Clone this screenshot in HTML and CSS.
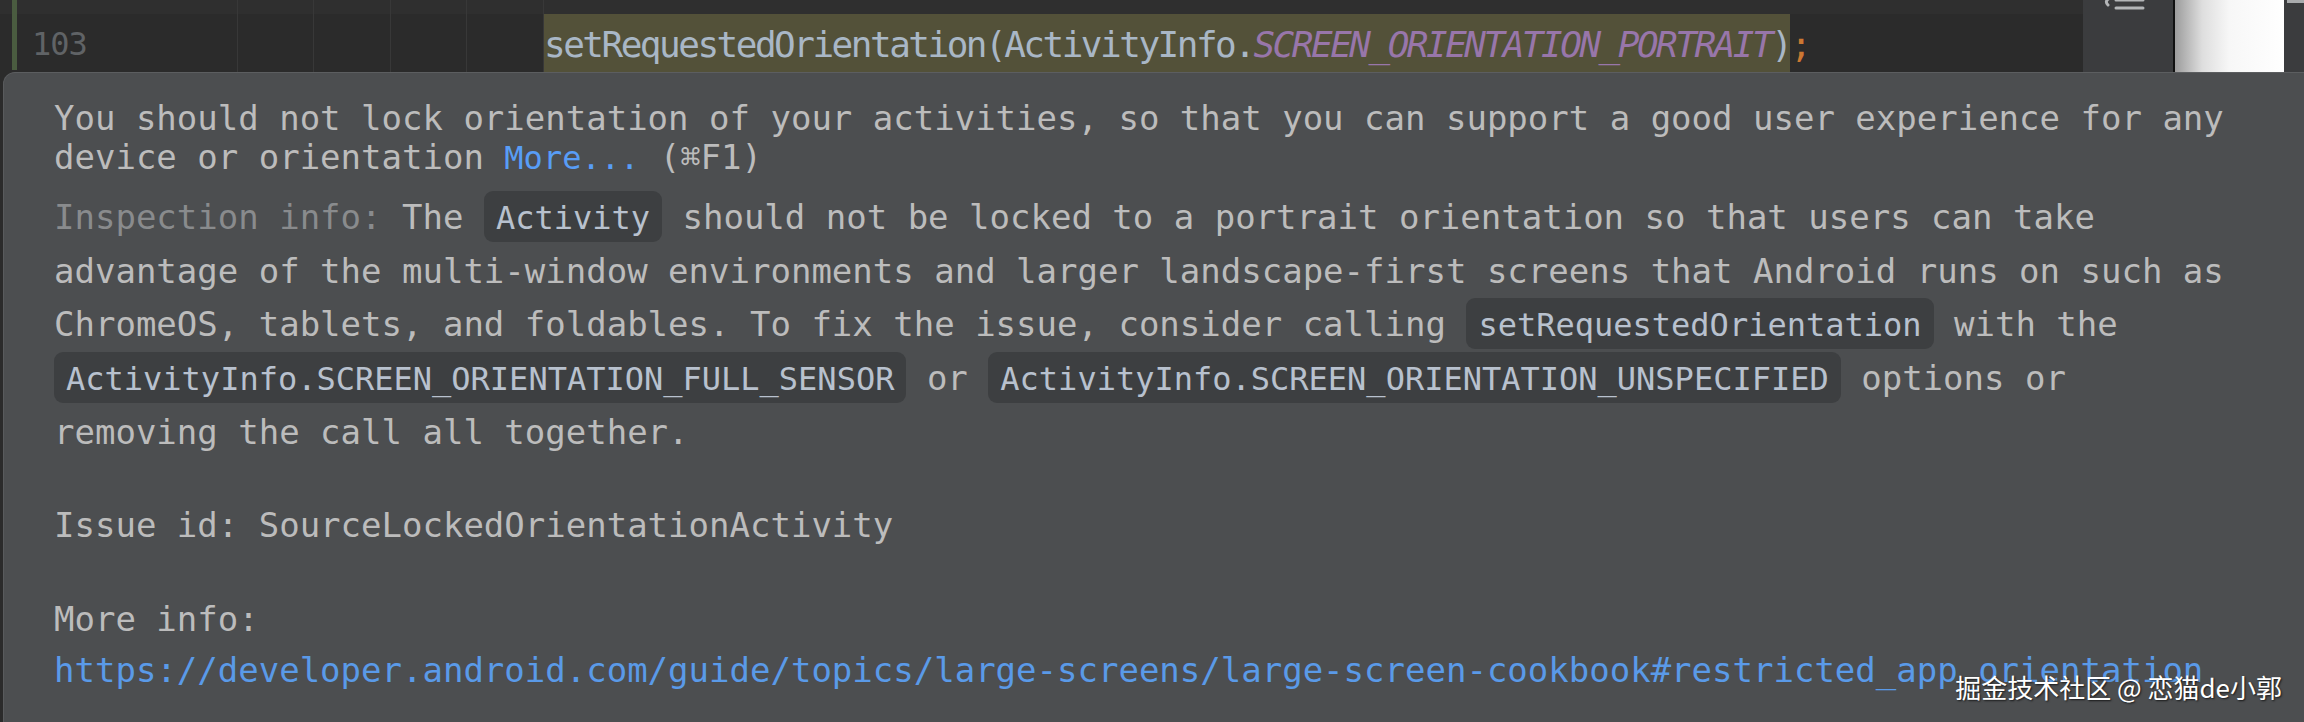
FILE: index.html
```html
<!DOCTYPE html>
<html>
<head>
<meta charset="utf-8">
<link rel="stylesheet" href="styles.css">
</head>
<body>
<div class="screen">
  <div class="editor">
    <div class="code-area">
      <div class="row prev">
        <div class="gutter"><span class="vcs"></span><span class="lnum"></span></div>
        <div class="code"></div>
      </div>
      <div class="row cur">
        <div class="gutter"><span class="vcs"></span><span class="lnum">103</span></div>
        <div class="code"><span class="indent"></span><span class="hl">setRequestedOrientation(ActivityInfo.<i class="const">SCREEN_ORIENTATION_PORTRAIT</i>)</span><span class="semi">;</span></div>
      </div>
    </div>
    <div class="toolbar">
      <svg class="tool-icon" width="46" height="14" viewBox="0 0 46 14">
        <path d="M9 0 Q3 3 7 7" fill="none" stroke="#b4b6b8" stroke-width="3" stroke-linecap="round"/>
        <path d="M15 2 H42" stroke="#b4b6b8" stroke-width="3" stroke-linecap="round"/>
        <path d="M15 10 H42" stroke="#b4b6b8" stroke-width="3" stroke-linecap="round"/>
      </svg>
    </div>
    <div class="preview"></div>
    <div class="edge"><span class="edge-line"></span></div>
  </div>
  <div class="popup">
    <p class="summary">You should not lock orientation of your activities, so that you can support a good user experience for any<br>device or orientation <a class="more">More...</a> (⌘F1)</p>
    <p class="details"><span class="label">Inspection info:</span> The <code class="chip">Activity</code> should not be locked to a portrait orientation so that users can take<br>advantage of the multi-window environments and larger landscape-first screens that Android runs on such as<br>ChromeOS, tablets, and foldables. To fix the issue, consider calling <code class="chip">setRequestedOrientation</code> with the<br><code class="chip">ActivityInfo.SCREEN_ORIENTATION_FULL_SENSOR</code> or <code class="chip">ActivityInfo.SCREEN_ORIENTATION_UNSPECIFIED</code> options or<br>removing the call all together.</p>
    <p class="issue">Issue id: SourceLockedOrientationActivity</p>
    <p class="info">More info:<br><a class="url">https://developer.android.com/guide/topics/large-screens/large-screen-cookbook#restricted_app_orientation</a></p>
  </div>
  <div class="watermark">掘金技术社区 @ 恋猫de小郭</div>
</div>
</body>
</html>
```
FILE: styles.css
```css
* { box-sizing: border-box; }
html, body {
  margin: 0;
  padding: 0;
  background: #2b2b2b;
}
.screen {
  position: relative;
  width: 2304px;
  height: 722px;
  overflow: hidden;
  background: #2b2b2b;
  font-family: "DejaVu Sans Mono", monospace;
}
.editor {
  display: flex;
  height: 72px;
}
.code-area {
  flex: 0 0 2083px;
  display: flex;
  flex-direction: column;
}
.row {
  display: flex;
}
.row.prev {
  height: 14px;
  background: #2f2f2f;
}
.row.cur {
  height: 58px;
  background: #2b2b2b;
}
.gutter {
  flex: 0 0 237px;
  display: flex;
  padding-left: 12px;
}
.vcs {
  width: 5px;
  background: #4a5c40;
}
.row.cur .vcs { margin-bottom: 2px; }
.lnum {
  padding-left: 15px;
  padding-top: 4px;
  line-height: 52px;
  font-size: 32px;
  letter-spacing: -1px;
  color: #606366;
}
.code {
  flex: 1;
  display: flex;
  background-image: repeating-linear-gradient(to right, #383838 0 1px, transparent 1px 76.4px);
  background-size: 307px 100%;
  background-repeat: no-repeat;
  font-size: 36px;
  letter-spacing: -2.5px;
  color: #a9b7c6;
  white-space: pre;
}
.indent {
  flex: 0 0 307px;
}
.hl {
  display: block;
  background: #535139;
  padding-top: 8px;
  line-height: 46px;
}
.const {
  color: #9876aa;
  font-style: italic;
}
.semi {
  display: block;
  padding-top: 8px;
  line-height: 46px;
  color: #cc7832;
}
.toolbar {
  flex: 0 0 90px;
  background: #3b3c3e;
  position: relative;
}
.tool-icon {
  display: block;
  margin-left: 18px;
  margin-top: -2px;
}
.preview {
  flex: 0 0 111px;
  border-left: 2px solid #111111;
  background: linear-gradient(to right, #9c9c9c 0%, #dedede 25%, #f7f7f7 50%, #ffffff 100%);
}
.edge {
  flex: 1;
  background: #3b3c3e;
  padding-left: 3px;
}
.edge-line {
  display: block;
  height: 3px;
  background: #a9abad;
}
.popup {
  margin-left: 3px;
  height: 660px;
  background: #4c4e50;
  border-top: 1px solid #5c5e60;
  border-left: 1px solid #595b5d;
  border-top-left-radius: 12px;
  padding: 26px 0 0 50px;
  color: #bcbcbc;
  font-size: 34px;
  white-space: nowrap;
}
.popup p {
  margin: 0;
}
.summary {
  line-height: 38.5px;
}
.more {
  color: #589df6;
  font-size: 32px;
}
.details {
  margin-top: 14px !important;
  line-height: 53px;
}
.label {
  color: #898b8d;
}
.chip {
  font-family: "DejaVu Sans Mono", monospace;
  font-size: 32px;
  background: #3d3f41;
  color: #b8c1ce;
  padding: 8px 12px 5px;
  border-radius: 9px;
}
.issue {
  margin-top: 42px !important;
  line-height: 49px;
}
.info {
  margin-top: 44px !important;
  line-height: 51px;
}
.url {
  color: #5a9ae8;
}
.watermark {
  position: absolute;
  right: 22px;
  top: 668px;
  font-family: "Noto Sans CJK SC", sans-serif;
  font-size: 26px;
  color: #ffffff;
  text-shadow: 1px 1px 2px rgba(0, 0, 0, 0.7);
  white-space: nowrap;
}
```
